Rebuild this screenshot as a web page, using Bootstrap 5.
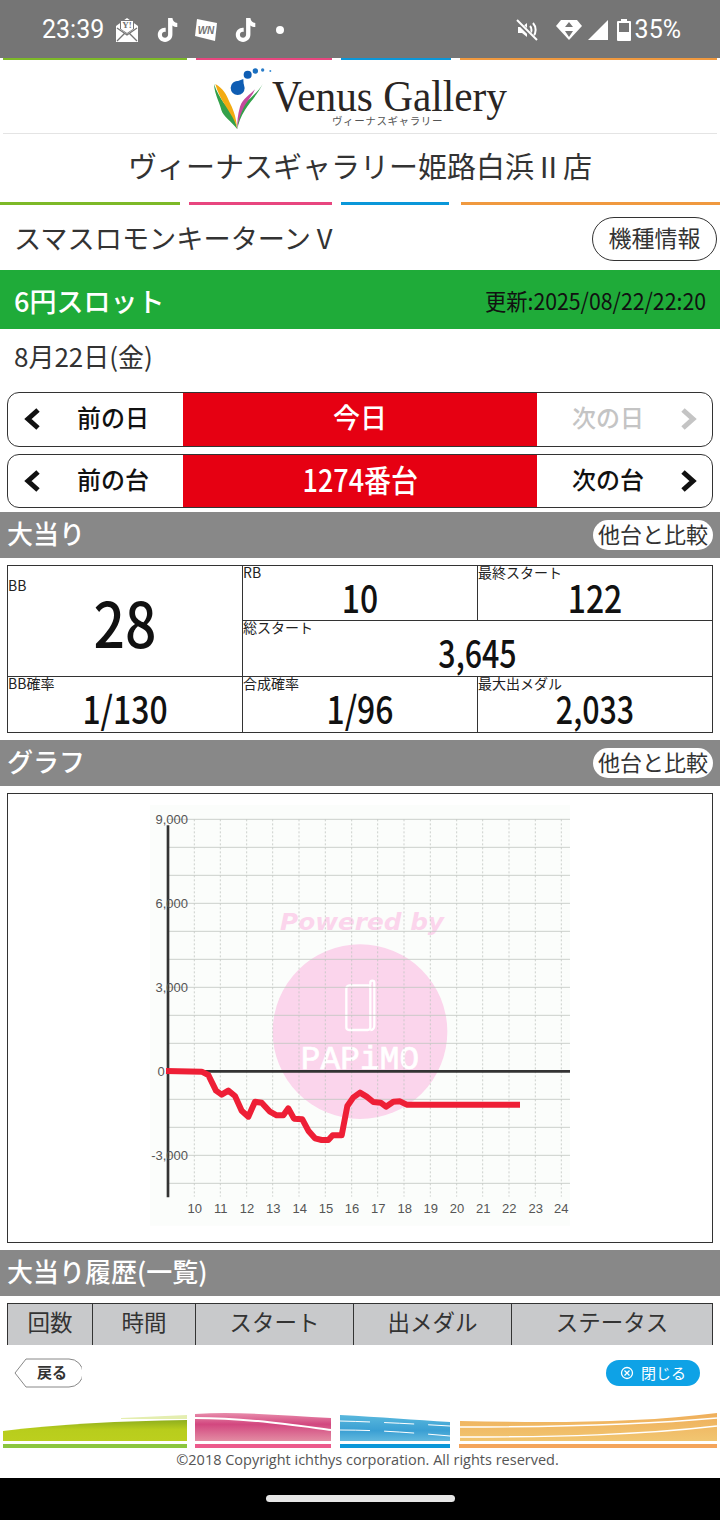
<!DOCTYPE html>
<html lang="ja">
<head>
  <meta charset="UTF-8" />
  <meta name="viewport" content="width=device-width, initial-scale=1.0"/>
  <title>ヴィーナスギャラリー姫路白浜Ⅱ店</title>
  <link href="https://cdn.jsdelivr.net/npm/bootstrap@5.3.0/dist/css/bootstrap.min.css" rel="stylesheet" />
  <style>
    html, body { width: 720px; height: 1520px; overflow: hidden; }
    body {
      background: #fff;
      font-family: "Noto Sans CJK JP", sans-serif;
      color: #333;
    }
    .status-bar { height: 58px; background: #757575; color: #fff; padding: 2px 39px 0 42px; font-family: Roboto, sans-serif; font-size: 25px; }
    .status-icons { gap: 14px; margin-left: 10px; }
    .status-dot { margin-left: 3px; }
    .stripes { display: grid; height: 3px; }
    .stripes > i { display: block; }
    .stripes-top { grid-template-columns: 184px 136px 110px 257px; column-gap: 9px; padding: 0 3px; height: 2px; }
    .stripes-mid { grid-template-columns: 180px 143px 108px 262px; column-gap: 9px; }
    .stripes-mid .c-orange { margin-left: 3px; }
    .c-green { background: #7db928; }
    .c-pink { background: #e8467f; }
    .c-blue { background: #0a97d9; }
    .c-orange { background: #f0993f; }
    .logo-row { height: 74px; margin: 0 3px; border-bottom: 1px solid #e4e4e4; padding-left: 207px; }
    .shop-title { height: 68px; font-size: 29px; padding-bottom: 4px; }
    .machine-row { height: 65px; padding: 0 3px 0 14px; }
    .machine-name { font-size: 27.200px; }
    .info-btn { width: 125px; height: 44px; border: 1px solid #333; border-radius: 22px; font-size: 23px; margin-top: 2px; padding-bottom: 2px; }
    .rate-bar { height: 59px; background: #1fab39; padding: 0 14px; }
    .rate-name { color: #fff; font-size: 27px; font-weight: 500; padding-top: 3px; }
    .rate-date { color: #111; font-size: 23px; transform: scaleX(.925); transform-origin: right center; padding-top: 2px; }
    .date-row { height: 63px; padding: 0 14px 11px; font-size: 26px; }
    .pager { height: 55px; margin: 0 7px 7px; border: 1px solid #333; border-radius: 12px; overflow: hidden; font-size: 24px; font-weight: 500; color: #111; }
    .pager-second { height: 54px; margin-bottom: 4px; }
    .pager-side { width: 175px; padding: 0 14px 5px 15px; }
    .pager-side svg { margin-top: 4px; }
    .pager-main { flex: 1; background: #e60012; color: #fff; font-size: 27px; font-weight: 500; padding-bottom: 4px; }
    .pager-num { font-size: 31px; transform: scaleX(.87); }
    .pager-off { color: #c4c4c4; }
    .section-bar { height: 46px; background: #888; padding: 0 7px; }
    .section-title { color: #fff; font-size: 26px; font-weight: 500; padding-bottom: 5px; }
    .compare-pill { background: #fff; border-radius: 15px; height: 30px; width: 120px; font-size: 22px; color: #333; padding-bottom: 3px; }
    .gap-7 { height: 7px; }
    .data-table { width: 706px; margin-left: 7px; table-layout: fixed; border-collapse: collapse; }
    .data-table td { border: 1px solid #333; height: 56px; padding: 0; vertical-align: top; line-height: 1; }
    .data-table tr:first-child td { height: 55px; }
    .cell-label { font-size: 14px; display: block; height: 14px; line-height: 14px; color: #222; margin-top: -1px; }
    .cell-value { display: block; text-align: center; font-size: 38px; line-height: 38px; font-weight: 500; color: #111; margin-top: -1px; transform: scaleX(.84); }
    .cell-comma { transform: scaleX(.8); }
    .cell-big { font-size: 62px; line-height: 62px; margin-top: -2px; transform: scaleX(.89); }
    .cell-tall { padding-top: 13px !important; }
    .graph-box { width: 706px; height: 450px; margin-left: 7px; border: 1px solid #333; padding: 6px 0 0 132px; }
    .graph-box svg { display: block; }
    .history-head { width: 706px; height: 42px; margin-left: 7px; display: grid; grid-template-columns: 84px 103px 158px 158px 201px; background: #c8c9cb; border: 1px solid #333; border-bottom: 0; font-size: 22.500px; }
    .history-head > div { border-left: 1px solid #333; padding-bottom: 5px; }
    .history-head > div:first-child { border-left: 0; }
    .foot-box { height: 133px; }
    .foot-actions { height: 67px; padding: 13px 20px 0 14px; }
    .close-pill { width: 94px; height: 26px; margin-top: 2px; border-radius: 13px; background: #0ea2e6; color: #fff; font-size: 15px; gap: 7px; }
    .copy-line { font-family: "Open Sans", sans-serif; font-size: 14.500px; color: #555; text-align: center; margin-top: 1px; line-height: 20px; padding-left: 15px; }
    .nav-bar { height: 42px; background: #000; padding-top: 17px; }
    .nav-pill { width: 189px; height: 7px; border-radius: 4px; background: #e6e6e6; }
  </style>
</head>
<body>
  <div class="status-bar d-flex align-items-center">
    <span>23:39</span>
    <div class="status-icons d-flex align-items-center">
      <svg width="26" height="26" viewBox="0 0 26 26">
        <path fill="#fff" d="M13 1 24 9v16H2V9z"/>
        <path fill="#757575" d="M6 3h14v9l-7 5-7-5z"/>
        <path fill="#fff" d="M7 4h12v8l-6 4-6-4z"/>
        <text x="13" y="11" text-anchor="middle" font-size="9" font-weight="700" fill="#757575" font-family="Liberation Serif">Y!</text>
        <path stroke="#757575" stroke-width="1.3" fill="none" d="M3 11l10 7 10-7M3 24l8-8M23 24l-8-8"/>
      </svg>
      <svg width="26" height="26" viewBox="0 0 24 24"><path fill="#fff" d="M13 1h4c.3 2.600 1.900 4.300 4.500 4.600v3.700c-1.700 0-3.200-.5-4.500-1.400v8.300c0 3.800-3 6.800-6.800 6.800S3.500 20 3.500 16.400c0-3.900 3.400-6.900 7.300-6.400v3.800c-1.900-.4-3.500.8-3.500 2.600 0 1.500 1.300 2.800 2.900 2.800 1.700 0 2.800-1.200 2.800-3z"/></svg>
      <svg width="24" height="24" viewBox="0 0 24 24"><path fill="#fff" d="M3 1l20 4-2 18L1 18z"/><text x="12" y="16" text-anchor="middle" font-size="10" font-weight="700" font-style="italic" fill="#757575" font-family="Liberation Sans">WN</text></svg>
      <svg width="26" height="26" viewBox="0 0 24 24"><path fill="#fff" d="M13 1h4c.3 2.600 1.900 4.300 4.500 4.600v3.700c-1.700 0-3.200-.5-4.500-1.400v8.300c0 3.800-3 6.800-6.800 6.800S3.500 20 3.500 16.400c0-3.900 3.400-6.900 7.300-6.400v3.800c-1.900-.4-3.500.8-3.500 2.600 0 1.500 1.300 2.800 2.900 2.800 1.700 0 2.800-1.200 2.800-3z"/></svg>
      <svg width="10" height="10" viewBox="0 0 10 10" class="status-dot"><circle cx="5" cy="5" r="4" fill="#fff"/></svg>
    </div>
    <div class="ms-auto d-flex align-items-center">
      <svg width="24" height="24" viewBox="0 0 24 24" class="me-3"><path fill="#fff" d="M3 9h4l5-4v14l-5-4H3z"/><path stroke="#fff" stroke-width="2" fill="none" d="M15 8c2 2 2 6 0 8M18 5c3.500 4 3.500 10 0 14"/><path stroke="#757575" stroke-width="4" d="M2 3l20 20"/><path stroke="#fff" stroke-width="2" d="M2 2l20 20"/></svg>
      <svg width="28" height="24" viewBox="0 0 28 24" class="me-1"><path fill="#fff" d="M14 22 1 8l5-6h16l5 6z"/><path fill="#757575" d="M14 4l4 5h-8zM14 19l-4-6h8z"/></svg>
      <svg width="22" height="22" viewBox="0 0 22 22" class="me-2"><path fill="#fff" d="M21 1v20H1z"/></svg>
      <svg width="14" height="24" viewBox="0 0 14 24"><path fill="#fff" d="M4 1h6v2h3a1 1 0 0 1 1 1v18a1 1 0 0 1-1 1H1a1 1 0 0 1-1-1V4a1 1 0 0 1 1-1h3z"/><path fill="#757575" d="M2 5h10v9H2z"/></svg>
      <span class="ms-1">35%</span>
    </div>
  </div>

  <div class="stripes stripes-top"><i class="c-green"></i><i class="c-pink"></i><i class="c-blue"></i><i class="c-orange"></i></div>

  <div class="logo-row">
    <svg width="330" height="73" viewBox="0 0 330 73">
      <g transform="translate(-10 0) scale(.3333)">
        <path fill="#33a04a" d="M42 72C44 105 58 125 64 150 70 170 95 185 112 208 104 170 92 150 72 130 60 112 50 95 42 72z"/>
        <path fill="#f3ab12" d="M46 72C70 85 80 105 88 125 98 145 108 165 112 208 106 180 90 160 75 135 62 115 52 95 46 72z"/>
        <path fill="#33a04a" d="M188 72C172 105 150 125 135 150 122 170 115 190 112 208 114 175 120 150 135 130 155 110 175 95 188 72z"/>
        <path fill="#c4499c" d="M165 88C150 105 128 115 120 140 113 165 111 185 112 208 115 180 122 160 135 135 145 120 158 105 165 88z"/>
        <circle cx="113" cy="84" r="21" fill="#0f5db3"/>
        <path fill="#0f5db3" d="M100 68 130 57 132 88z"/>
        <circle cx="143" cy="44" r="12" fill="#0f5db3"/>
        <circle cx="166" cy="33" r="8" fill="#1b6fc0"/>
        <circle cx="188" cy="30" r="5" fill="#2a7cc8"/>
        <circle cx="211" cy="33" r="3" fill="#3b8fd6"/>
      </g>
      <text x="62" y="51" font-family="Liberation Serif, serif" font-size="44" fill="#2a2523" textLength="235" lengthAdjust="spacingAndGlyphs">Venus Gallery</text>
      <text x="122" y="65" font-family="Noto Sans CJK JP, sans-serif" font-size="10.500" letter-spacing=".6" fill="#555">ヴィーナスギャラリー</text>
    </svg>
  </div>

  <div class="shop-title d-flex align-items-center justify-content-center">ヴィーナスギャラリー姫路白浜Ⅱ店</div>
  <div class="stripes stripes-mid"><i class="c-green"></i><i class="c-pink"></i><i class="c-blue"></i><i class="c-orange"></i></div>

  <div class="machine-row d-flex align-items-center justify-content-between">
    <div class="machine-name">スマスロモンキーターンⅤ</div>
    <div class="info-btn d-flex align-items-center justify-content-center">機種情報</div>
  </div>

  <div class="rate-bar d-flex align-items-center justify-content-between">
    <div class="rate-name">6円スロット</div>
    <div class="rate-date">更新:2025/08/22/22:20</div>
  </div>

  <div class="date-row d-flex align-items-center">8月22日(金)</div>

  <div class="pager d-flex">
    <div class="pager-side d-flex align-items-center">
      <svg width="18" height="24" viewBox="0 0 18 24"><path fill="none" stroke="#111" stroke-width="5" d="M15 3 5 12l10 9"/></svg>
      <span class="flex-fill text-center ps-3">前の日</span>
    </div>
    <div class="pager-main d-flex align-items-center justify-content-center">今日</div>
    <div class="pager-side pager-off d-flex align-items-center">
      <span class="flex-fill text-center pe-3">次の日</span>
      <svg width="18" height="24" viewBox="0 0 18 24"><path fill="none" stroke="#c4c4c4" stroke-width="5" d="M3 3l10 9-10 9"/></svg>
    </div>
  </div>
  <div class="pager pager-second d-flex">
    <div class="pager-side d-flex align-items-center">
      <svg width="18" height="24" viewBox="0 0 18 24"><path fill="none" stroke="#111" stroke-width="5" d="M15 3 5 12l10 9"/></svg>
      <span class="flex-fill text-center ps-3">前の台</span>
    </div>
    <div class="pager-main d-flex align-items-center justify-content-center"><span class="pager-num">1274番台</span></div>
    <div class="pager-side d-flex align-items-center">
      <span class="flex-fill text-center pe-3">次の台</span>
      <svg width="18" height="24" viewBox="0 0 18 24"><path fill="none" stroke="#111" stroke-width="5" d="M3 3l10 9-10 9"/></svg>
    </div>
  </div>

  <div class="section-bar d-flex align-items-center justify-content-between">
    <div class="section-title">大当り</div>
    <div class="compare-pill d-flex align-items-center justify-content-center">他台と比較</div>
  </div>
  <div class="gap-7"></div>

  <table class="data-table">
    <tr>
      <td rowspan="2" class="cell-tall"><span class="cell-label">BB</span><span class="cell-value cell-big">28</span></td>
      <td><span class="cell-label">RB</span><span class="cell-value">10</span></td>
      <td><span class="cell-label">最終スタート</span><span class="cell-value">122</span></td>
    </tr>
    <tr>
      <td colspan="2"><span class="cell-label">総スタート</span><span class="cell-value cell-comma">3,645</span></td>
    </tr>
    <tr>
      <td><span class="cell-label">BB確率</span><span class="cell-value">1/130</span></td>
      <td><span class="cell-label">合成確率</span><span class="cell-value">1/96</span></td>
      <td><span class="cell-label">最大出メダル</span><span class="cell-value cell-comma">2,033</span></td>
    </tr>
  </table>
  <div class="gap-7"></div>

  <div class="section-bar d-flex align-items-center justify-content-between">
    <div class="section-title">グラフ</div>
    <div class="compare-pill d-flex align-items-center justify-content-center">他台と比較</div>
  </div>
  <div class="gap-7"></div>

  <div class="graph-box">
    <svg width="440" height="430" viewBox="0 0 1320 1290" font-family="Liberation Sans, sans-serif">
      <rect x="30" y="15" width="1260" height="1262" fill="#fbfdfb"/>
      <circle cx="660" cy="695" r="262" fill="#fbd5ec"/>
      <text x="420" y="390" font-family="DejaVu Sans, sans-serif" font-size="70" font-weight="700" font-style="italic" fill="#fbd5ec" textLength="492" lengthAdjust="spacingAndGlyphs">Powered by</text>
      <path fill="none" stroke="#fff" stroke-width="7" d="M630 556h55a6 6 0 0 1 6 6v120a8 8 0 0 1-8 8h-56a8 8 0 0 1-8-8V566a10 10 0 0 1 11-10zM691 556v-8a6 6 0 0 1 12 0v130a12 12 0 0 1-12 12"/>
      <text x="482" y="808" font-family="Liberation Mono, monospace" font-size="98" fill="#fff" stroke="#fff" stroke-width="2" textLength="355">PAPiMO</text>
      <g stroke="#c3c6c3" stroke-width="2.500">
        <path d="M84 58H1290M84 142H1290M84 226H1290M84 310H1290M84 394H1290M84 478H1290M84 562H1290M84 646H1290M84 730H1290M84 898H1290M84 982H1290M84 1066H1290M84 1150H1290"/>
      </g>
      <g stroke="#c3c6c3" stroke-width="2.500" stroke-dasharray="6 6">
        <path d="M163 58V1190M241 58V1190M320 58V1190M398 58V1190M477 58V1190M556 58V1190M635 58V1190M713 58V1190M792 58V1190M871 58V1190M950 58V1190M1028 58V1190M1107 58V1190M1186 58V1190M1264 58V1190"/>
      </g>
      <path stroke="#333" stroke-width="8" d="M84 76V1192"/>
      <path stroke="#333" stroke-width="8" d="M84 814H1290"/>
      <polyline fill="none" stroke="#ee1f36" stroke-width="18" stroke-linejoin="round" points="78,813 185,815 205,825 228,872 245,884 265,872 285,888 305,932 325,950 345,905 365,908 390,935 410,946 430,946 445,925 462,956 487,958 505,992 525,1015 545,1020 565,1020 578,1006 605,1006 622,918 640,892 660,878 680,890 700,906 722,908 738,920 760,905 780,904 800,914 1140,914"/>
      <g font-size="39" fill="#555" text-anchor="end">
        <text x="144" y="72">9,000</text>
        <text x="144" y="324">6,000</text>
        <text x="144" y="576">3,000</text>
        <text x="74" y="828">0</text>
        <text x="144" y="1080">-3,000</text>
      </g>
      <g font-size="39" fill="#555" text-anchor="middle">
        <text x="164" y="1238">10</text><text x="242" y="1238">11</text><text x="321" y="1238">12</text><text x="400" y="1238">13</text><text x="479" y="1238">14</text><text x="558" y="1238">15</text><text x="636" y="1238">16</text><text x="715" y="1238">17</text><text x="794" y="1238">18</text><text x="872" y="1238">19</text><text x="951" y="1238">20</text><text x="1030" y="1238">21</text><text x="1108" y="1238">22</text><text x="1187" y="1238">23</text><text x="1264" y="1238">24</text>
      </g>
    </svg>
  </div>
  <div class="gap-7"></div>

  <div class="section-bar d-flex align-items-center">
    <div class="section-title">大当り履歴(一覧)</div>
  </div>
  <div class="gap-7"></div>

  <div class="history-head">
    <div class="d-flex align-items-center justify-content-center">回数</div>
    <div class="d-flex align-items-center justify-content-center">時間</div>
    <div class="d-flex align-items-center justify-content-center">スタート</div>
    <div class="d-flex align-items-center justify-content-center">出メダル</div>
    <div class="d-flex align-items-center justify-content-center">ステータス</div>
  </div>

  <div class="foot-box">
    <div class="foot-actions d-flex justify-content-between align-items-start">
      <svg width="68" height="30" viewBox="0 0 68 30">
        <path fill="#fff" stroke="#888" d="M12 1h43a13 13 0 0 1 0 28H12L1 15z"/>
        <text x="23" y="20" font-family="Noto Sans CJK JP, sans-serif" font-size="15" font-weight="700" fill="#333">戻る</text>
      </svg>
      <div class="close-pill d-flex align-items-center justify-content-center">
        <svg width="14" height="14" viewBox="0 0 14 14"><circle cx="7" cy="7" r="5.500" fill="none" stroke="#fff" stroke-width="1.300"/><path stroke="#fff" stroke-width="1.300" d="M4.500 4.500l5 5M9.500 4.500l-5 5"/></svg>
        <span>閉じる</span>
      </div>
    </div>
    <svg width="720" height="37" viewBox="0 0 720 37" class="d-block">
      <defs>
        <linearGradient id="gGreen" x1="0" y1="0" x2="0" y2="1"><stop offset="0" stop-color="#8fae1e"/><stop offset=".45" stop-color="#b8cd1c"/><stop offset="1" stop-color="#bccf1e"/></linearGradient>
        <linearGradient id="gPink" x1="0" y1="0" x2="0" y2="1"><stop offset="0" stop-color="#e88cab"/><stop offset=".4" stop-color="#d2477f"/><stop offset="1" stop-color="#e38ca3"/></linearGradient>
        <linearGradient id="gBlue" x1="0" y1="0" x2="0" y2="1"><stop offset="0" stop-color="#59b8dd"/><stop offset=".6" stop-color="#3a9fd3"/><stop offset="1" stop-color="#62b9de"/></linearGradient>
        <linearGradient id="gOrange" x1="0" y1="0" x2="0" y2="1"><stop offset="0" stop-color="#efae5a"/><stop offset="1" stop-color="#f1c671"/></linearGradient>
      </defs>
      <path fill="#e4eeb0" d="M121 6l66-3v4h-66z"/>
      <path fill="url(#gGreen)" d="M3 19C60 12 120 9 187 8v21H3z"/>
      <path fill="url(#gPink)" d="M195 2c45-3 90 2 136 4v23H195z"/>
      <path fill="none" stroke="#fff" stroke-width="2" d="M195 6c50 0 90 6 136 12"/>
      <path fill="url(#gBlue)" d="M340 3c40 2 75 5 110 7v19H340z"/>
      <path fill="none" stroke="#fff" stroke-width="1" stroke-dasharray="30 14" d="M340 9c40 1 75 3 110 5M340 18c40 0 75 3 110 6"/>
      <path fill="url(#gOrange)" d="M460 9c90 2 180 2 257-8v28H460z"/>
      <path fill="none" stroke="#fff" stroke-width="1.500" d="M460 15c100 0 180-2 257-9M460 25c100 0 180-2 257-11"/>
      <rect x="3" y="32" width="184" height="4" fill="#8cc63f"/>
      <rect x="195" y="32" width="136" height="4" fill="#ec5a8c"/>
      <rect x="340" y="32" width="110" height="4" fill="#0a97d9"/>
      <rect x="459" y="32" width="258" height="4" fill="#f4a55b"/>
    </svg>
    <div class="copy-line">©2018 Copyright ichthys corporation. All rights reserved.</div>
  </div>

  <div class="nav-bar d-flex justify-content-center">
    <div class="nav-pill"></div>
  </div>

  <script src="https://cdn.jsdelivr.net/npm/bootstrap@5.3.0/dist/js/bootstrap.bundle.min.js"></script>
</body>
</html>
